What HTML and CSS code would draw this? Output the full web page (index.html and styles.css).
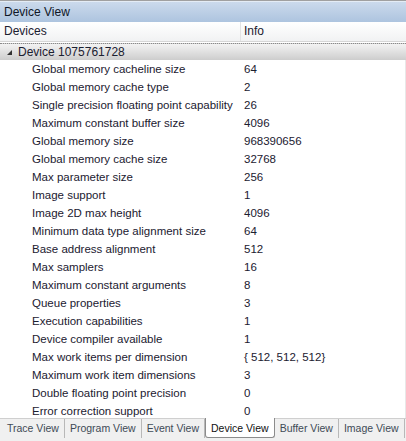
FILE: index.html
```html
<!DOCTYPE html>
<html>
<head>
<meta charset="utf-8">
<link rel="stylesheet" href="styles.css">
</head>
<body>
<div class="window">
  <div class="title">Device View</div>
  <div class="colhead">
    <div class="col1">Devices</div>
    <div class="col2">Info</div>
  </div>
  <div class="group"><span class="arrow"></span>Device 1075761728</div>
  <div class="rows">
    <div class="row"><span class="k">Global memory cacheline size</span><span class="v">64</span></div>
    <div class="row"><span class="k">Global memory cache type</span><span class="v">2</span></div>
    <div class="row"><span class="k">Single precision floating point capability</span><span class="v">26</span></div>
    <div class="row"><span class="k">Maximum constant buffer size</span><span class="v">4096</span></div>
    <div class="row"><span class="k">Global memory size</span><span class="v">968390656</span></div>
    <div class="row"><span class="k">Global memory cache size</span><span class="v">32768</span></div>
    <div class="row"><span class="k">Max parameter size</span><span class="v">256</span></div>
    <div class="row"><span class="k">Image support</span><span class="v">1</span></div>
    <div class="row"><span class="k">Image 2D max height</span><span class="v">4096</span></div>
    <div class="row"><span class="k">Minimum data type alignment size</span><span class="v">64</span></div>
    <div class="row"><span class="k">Base address alignment</span><span class="v">512</span></div>
    <div class="row"><span class="k">Max samplers</span><span class="v">16</span></div>
    <div class="row"><span class="k">Maximum constant arguments</span><span class="v">8</span></div>
    <div class="row"><span class="k">Queue properties</span><span class="v">3</span></div>
    <div class="row"><span class="k">Execution capabilities</span><span class="v">1</span></div>
    <div class="row"><span class="k">Device compiler available</span><span class="v">1</span></div>
    <div class="row"><span class="k">Max work items per dimension</span><span class="v">{ 512, 512, 512}</span></div>
    <div class="row"><span class="k">Maximum work item dimensions</span><span class="v">3</span></div>
    <div class="row"><span class="k">Double floating point precision</span><span class="v">0</span></div>
    <div class="row"><span class="k">Error correction support</span><span class="v">0</span></div>
  </div>
  <div class="tabs">
    <div class="tab">Trace View</div>
    <div class="tab">Program View</div>
    <div class="tab">Event View</div>
    <div class="tab active">Device View</div>
    <div class="tab">Buffer View</div>
    <div class="tab">Image View</div>
  </div>
</div>
</body>
</html>
```
FILE: styles.css
```css
html, body {
  margin: 0;
  padding: 0;
  background: #ffffff;
}
body {
  font-family: "Liberation Sans", Arial, sans-serif;
  font-size: 11.5px;
  color: #1b2030;
}
.window {
  width: 406px;
  height: 441px;
  display: flex;
  flex-direction: column;
  overflow: hidden;
  border-top: 1px solid #a0a0a0;
  box-sizing: border-box;
}
.title {
  height: 20px;
  line-height: 20px;
  padding-left: 4px;
  background: linear-gradient(#cbdaec, #adc4df);
  border-top: 1px solid #e4ecf5;
  color: #0f1626;
  font-size: 12px;
  flex: none;
}
.colhead {
  height: 19px;
  display: flex;
  background: linear-gradient(#ffffff, #f1f2f3);
  border-bottom: 1px solid #d6d6d6;
  font-size: 12px;
  flex: none;
}
.col1 {
  width: 236px;
  padding-left: 4px;
  line-height: 19px;
  border-right: 1px solid #e2e3e4;
}
.col2 {
  padding-left: 3px;
  line-height: 19px;
}
.group {
  height: 16px;
  line-height: 16px;
  margin-top: 1px;
  border-top: 1px dotted #8a8a8a;
  background: linear-gradient(#f3f3f3, #cdcdcd);
  display: flex;
  align-items: center;
  padding-left: 7px;
  font-size: 12px;
  flex: none;
}
.arrow {
  width: 0;
  height: 0;
  border-left: 5px solid transparent;
  border-bottom: 5px solid #333;
  margin-right: 6px;
}
.rows {
  flex: 1;
  padding-top: 0;
  overflow: hidden;
  border-right: 1px solid #e8e8e8;
}
.row {
  height: 18px;
  line-height: 18px;
  display: flex;
}
.k {
  width: 212px;
  flex: none;
  padding-left: 32px;
  white-space: nowrap;
  overflow: hidden;
}
.v {
  white-space: nowrap;
}
.tabs {
  flex: none;
  height: 22px;
  display: flex;
  align-items: flex-start;
  background: #f0f0f0;
  border-top: 1px solid #cfcfcf;
  padding-left: 2px;
  font-size: 10.5px;
}
.tab {
  flex: none;
  white-space: nowrap;
  padding: 0 5px;
  height: 19px;
  line-height: 19px;
  color: #404a56;
  border-right: 1px solid #b8b8b8;
  margin-top: 0;
}
.tab.active {
  background: #ffffff;
  color: #111;
  border: 1px solid #8c8c8c;
  border-top: none;
  border-radius: 0 0 3px 3px;
  margin-top: -1px;
  height: 19px;
  line-height: 20px;
  padding-top: 0;
}
```
